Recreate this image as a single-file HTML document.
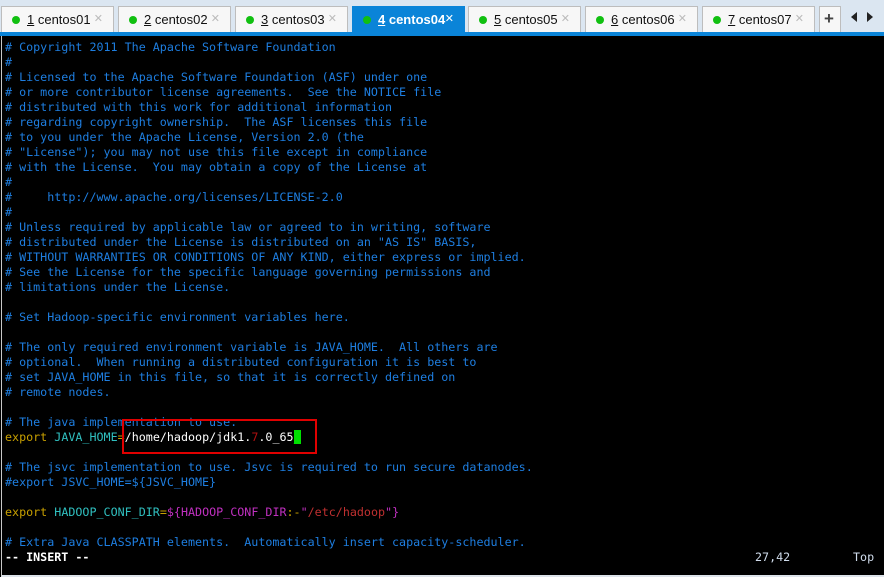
<!DOCTYPE html>
<html><head><style>
body{margin:0;width:884px;height:577px;overflow:hidden;background:#000;font-family:"Liberation Sans",sans-serif;position:relative}
#top{position:absolute;left:0;top:0;width:884px;height:35px;background:#dbe6f1}
.tab{position:absolute;top:6px;height:26px;width:113px;background:#f7f7f7;border:1px solid #bdbdbd;border-bottom:none;font-size:13px;color:#111;box-sizing:border-box}
.tab .d{position:absolute;left:10px;top:9px;width:8px;height:8px;border-radius:50%;background:#11c011}
.tab .t{position:absolute;left:25px;top:5px}
.tab .x{position:absolute;right:10px;top:5px;color:#bbb;font-size:11px}
.tab.a{background:#0a84d8;color:#fff;border-color:#0a84d8;font-weight:bold}
.tab.a .x{color:#fff;font-weight:normal}
#bar{position:absolute;left:0;top:32px;width:884px;height:4px;background:#0a84d8}
#term{position:absolute;left:1px;top:36px;width:883px;height:539px;background:#000;border-left:1px solid #c8c8c8;border-bottom:2px solid #dde3ea}
pre{margin:0;position:absolute;left:5px;top:40px;font-family:"DejaVu Sans Mono","Liberation Mono",monospace;font-size:11.7px;line-height:15px;color:#1e7ee0}
.y{color:#c8a000}.c{color:#30c0c0}.w{color:#fff}.m{color:#c030c0}.r{color:#c03030}.dr{color:#b01010}
.cur{background:#00e000;color:#00e000}
</style></head><body>
<div id="top"></div>
<div class="tab" style="left:1px"><span class="d"></span><span class="t"><u>1</u> centos01</span><span class="x">✕</span></div>
<div class="tab" style="left:118px"><span class="d"></span><span class="t"><u>2</u> centos02</span><span class="x">✕</span></div>
<div class="tab" style="left:235px"><span class="d"></span><span class="t"><u>3</u> centos03</span><span class="x">✕</span></div>
<div class="tab a" style="left:352px"><span class="d"></span><span class="t"><u>4</u> centos04</span><span class="x">✕</span></div>
<div class="tab" style="left:468px"><span class="d"></span><span class="t"><u>5</u> centos05</span><span class="x">✕</span></div>
<div class="tab" style="left:585px"><span class="d"></span><span class="t"><u>6</u> centos06</span><span class="x">✕</span></div>
<div class="tab" style="left:702px"><span class="d"></span><span class="t"><u>7</u> centos07</span><span class="x">✕</span></div>
<div class="tab" style="left:819px;width:22px"><span style="position:absolute;left:4px;top:2px;font-size:17px;font-weight:bold;color:#444">+</span></div>
<div style="position:absolute;left:851px;top:12px;width:0;height:0;border-top:5px solid transparent;border-bottom:5px solid transparent;border-right:6px solid #222"></div>
<div style="position:absolute;left:867px;top:12px;width:0;height:0;border-top:5px solid transparent;border-bottom:5px solid transparent;border-left:6px solid #222"></div>
<div id="bar"></div>
<div id="term"></div>
<pre># Copyright 2011 The Apache Software Foundation
#
# Licensed to the Apache Software Foundation (ASF) under one
# or more contributor license agreements.  See the NOTICE file
# distributed with this work for additional information
# regarding copyright ownership.  The ASF licenses this file
# to you under the Apache License, Version 2.0 (the
# "License"); you may not use this file except in compliance
# with the License.  You may obtain a copy of the License at
#
#     http://www.apache.org/licenses/LICENSE-2.0
#
# Unless required by applicable law or agreed to in writing, software
# distributed under the License is distributed on an "AS IS" BASIS,
# WITHOUT WARRANTIES OR CONDITIONS OF ANY KIND, either express or implied.
# See the License for the specific language governing permissions and
# limitations under the License.

# Set Hadoop-specific environment variables here.

# The only required environment variable is JAVA_HOME.  All others are
# optional.  When running a distributed configuration it is best to
# set JAVA_HOME in this file, so that it is correctly defined on
# remote nodes.

# The java implementation to use.
<span class="y">export</span> <span class="c">JAVA_HOME</span><span class="y">=</span><span class="w">/home/hadoop/jdk1.</span><span class="dr">7</span><span class="w">.0_65</span><span class="cur">_</span>

# The jsvc implementation to use. Jsvc is required to run secure datanodes.
#export JSVC_HOME=${JSVC_HOME}

<span class="y">export</span> <span class="c">HADOOP_CONF_DIR</span><span class="y">=</span><span class="m">${HADOOP_CONF_DIR</span><span class="y">:-</span><span class="m">"</span><span class="r">/etc/hadoop</span><span class="m">"}</span>

# Extra Java CLASSPATH elements.  Automatically insert capacity-scheduler.
<span class="w" style="font-weight:bold">-- INSERT --</span></pre>
<div style="position:absolute;left:755px;top:550px;font-family:'DejaVu Sans Mono',monospace;font-size:11.7px;color:#d0dcec">27,42</div>
<div style="position:absolute;left:853px;top:550px;font-family:'DejaVu Sans Mono',monospace;font-size:11.7px;color:#d0dcec">Top</div>
<div style="position:absolute;left:122px;top:419px;width:195px;height:35px;border:2px solid #e00000;box-sizing:border-box"></div>
</body></html>
